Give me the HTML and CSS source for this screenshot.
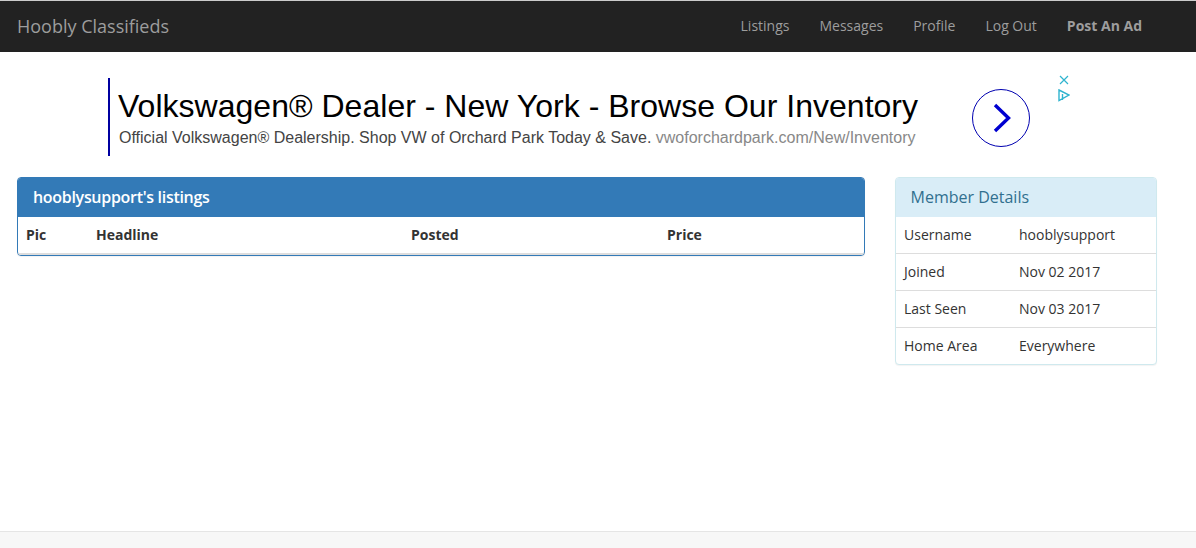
FILE: index.html
```html
<!DOCTYPE html>
<html lang="en">
<head>
<meta charset="utf-8">
<title>hooblysupport's listings</title>
<link rel="stylesheet" href="styles.css">
</head>
<body>
<nav class="navbar">
  <a class="brand" href="#">Hoobly Classifieds</a>
  <ul class="nav">
    <li><a href="#">Listings</a></li>
    <li><a href="#">Messages</a></li>
    <li><a href="#">Profile</a></li>
    <li><a href="#">Log Out</a></li>
    <li><a class="strong" href="#">Post An Ad</a></li>
  </ul>
</nav>
<section class="ad">
  <div class="ad-copy">
    <div class="ad-title">Volkswagen® Dealer - New York - Browse Our Inventory</div>
    <div class="ad-text">Official Volkswagen® Dealership. Shop VW of Orchard Park Today &amp; Save. <span class="ad-url">vwoforchardpark.com/New/Inventory</span></div>
  </div>
  <div class="ad-go">
    <svg width="58" height="58" viewBox="0 0 58 58"><circle cx="29" cy="29" r="28.5" fill="none" stroke="#0000b0" stroke-width="1"/><path d="M23 16 L36.5 29 L23 42" fill="none" stroke="#0000d0" stroke-width="3.4"/></svg>
  </div>
  <div class="ad-marks">
    <svg width="12" height="12" viewBox="0 0 12 12"><path d="M2 2 L10 10 M10 2 L2 10" stroke="#2fb4cf" stroke-width="1.2" fill="none"/></svg>
    <svg width="12" height="13" viewBox="0 0 12 13"><path d="M1 1 L11 6 L1 11.5 Z M4.5 5 L4.5 11" stroke="#2fb4cf" stroke-width="1.4" fill="none"/></svg>
  </div>
</section>
<main class="content">
  <section class="panel panel-primary">
    <h2 class="panel-heading">hooblysupport's listings</h2>
    <table class="listing">
      <thead>
        <tr><th class="c-pic">Pic</th><th class="c-head">Headline</th><th class="c-post">Posted</th><th>Price</th></tr>
      </thead>
    </table>
  </section>
  <aside class="panel panel-info">
    <h2 class="panel-heading">Member Details</h2>
    <table class="details">
      <tr><td class="c-label">Username</td><td>hooblysupport</td></tr>
      <tr><td class="c-label">Joined</td><td>Nov 02 2017</td></tr>
      <tr><td class="c-label">Last Seen</td><td>Nov 03 2017</td></tr>
      <tr><td class="c-label">Home Area</td><td>Everywhere</td></tr>
    </table>
  </aside>
</main>
<footer class="footer"></footer>
</body>
</html>
```
FILE: styles.css
```css
* { box-sizing: border-box; }
html, body { margin: 0; padding: 0; }
body {
  height: 548px;
  overflow: hidden;
  display: flex;
  flex-direction: column;
  background: #fff;
  color: #333;
  font-family: "Open Sans", sans-serif;
  font-size: 14px;
}
a { text-decoration: none; color: inherit; }

.navbar {
  height: 52px;
  flex: none;
  display: flex;
  align-items: center;
  justify-content: space-between;
  background: #222;
  border-top: 1px solid #ccc;
  padding: 0 54px 2px 17px;
  color: #9d9d9d;
}
.brand { font-size: 18px; }
.nav { display: flex; list-style: none; margin: 0; padding: 0; gap: 30px; }
.strong { font-weight: 700; }

.ad {
  flex: none;
  height: 125px;
  display: flex;
  align-items: flex-start;
  padding: 26px 0 0 108px;
  font-family: "Liberation Sans", Arial, sans-serif;
}
.ad-copy {
  width: 864px;
  height: 78px;
  border-left: 2px solid #0000a0;
  padding: 10px 0 0 8px;
}
.ad-title { font-size: 32px; line-height: 37px; letter-spacing: 0.02px; color: #000; white-space: nowrap; }
.ad-text { font-size: 16px; line-height: 20px; margin-top: 3px; padding-left: 1px; color: #444; white-space: nowrap; }
.ad-url { color: #888; }
.ad-go { margin-top: 11px; line-height: 0; }
.ad-marks {
  display: flex;
  flex-direction: column;
  gap: 3px;
  margin: -4px 0 0 28px;
  line-height: 0;
}

.content {
  flex: 1;
  display: flex;
  align-items: flex-start;
  gap: 30px;
  padding: 0 39px 0 17px;
}
.panel {
  border: 1px solid;
  border-radius: 4px;
  background: #fff;
  overflow: hidden;
  box-shadow: 0 1px 1px rgba(0,0,0,.05);
}
.panel-primary { flex: none; width: 848px; border-color: #337ab7; }
.panel-info { flex: none; width: 262px; border-color: #cfe9ee; }
.panel-heading {
  margin: 0;
  height: 39px;
  padding: 0 15px;
  font-size: 16px;
  font-weight: 400;
  line-height: 39px;
}
.panel-primary .panel-heading { background: #337ab7; color: #fff; font-weight: 600; letter-spacing: -0.3px; }
.panel-info .panel-heading { background: #d9edf7; color: #31708f; padding-left: 14.5px; border-bottom: 1px solid #d9edf7; }

table { border-collapse: collapse; width: 100%; table-layout: fixed; }
.listing th {
  height: 37px;
  padding: 0 8px 2px;
  text-align: left;
  font-weight: 700;
  border-bottom: 2px solid #ddd;
}
.c-pic { width: 70px; }
.c-head { width: 315px; }
.c-post { width: 256px; }
.details td {
  height: 37px;
  padding: 0 8px;
  border-top: 1px solid #ddd;
}
.details tr:first-child td { border-top: 0; height: 36px; }
.c-label { width: 115px; }

.footer {
  flex: none;
  height: 17px;
  background: #f7f7f7;
  border-top: 1px solid #e5e5e5;
}
```
